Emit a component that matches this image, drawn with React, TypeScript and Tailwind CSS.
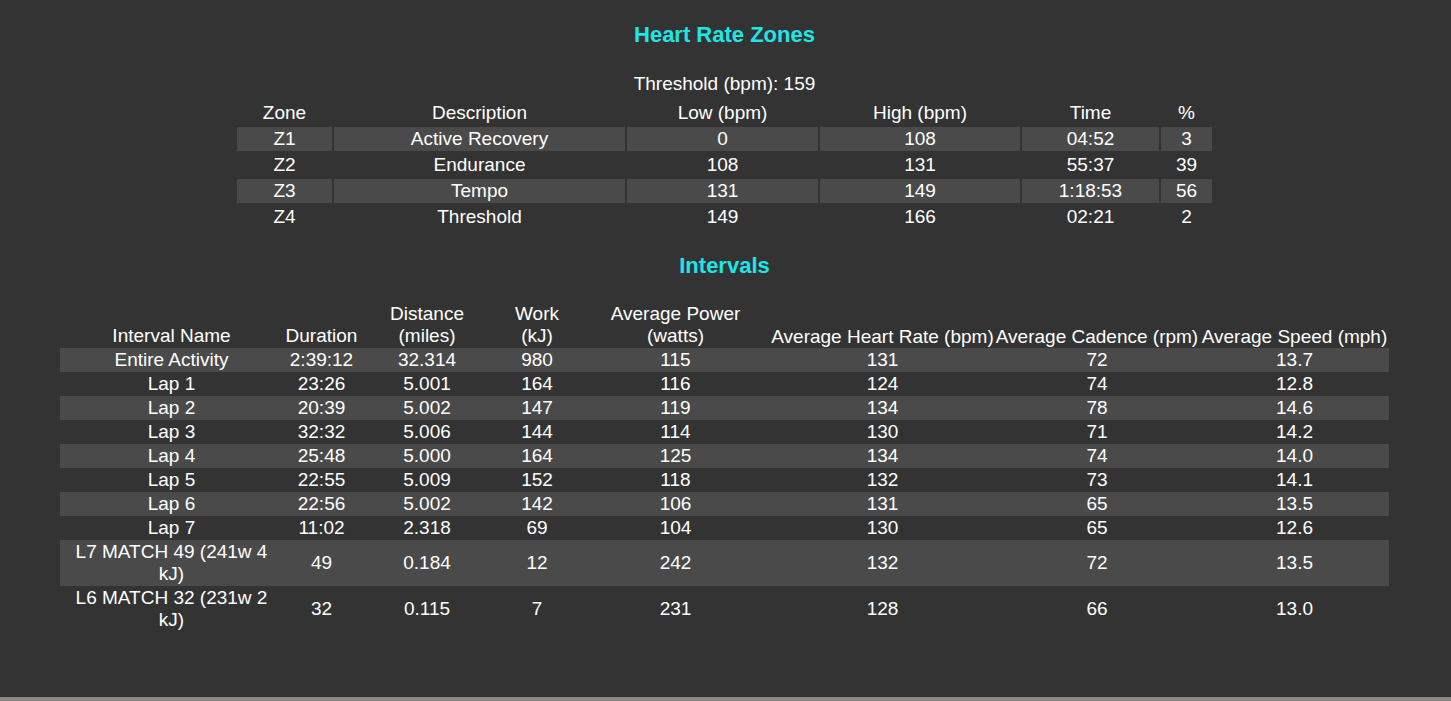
const zones = [
  ['Z1', 'Active Recovery', '0', '108', '04:52', '3'],
  ['Z2', 'Endurance', '108', '131', '55:37', '39'],
  ['Z3', 'Tempo', '131', '149', '1:18:53', '56'],
  ['Z4', 'Threshold', '149', '166', '02:21', '2'],
];

const intervals = [
  ['Entire Activity', '2:39:12', '32.314', '980', '115', '131', '72', '13.7'],
  ['Lap 1', '23:26', '5.001', '164', '116', '124', '74', '12.8'],
  ['Lap 2', '20:39', '5.002', '147', '119', '134', '78', '14.6'],
  ['Lap 3', '32:32', '5.006', '144', '114', '130', '71', '14.2'],
  ['Lap 4', '25:48', '5.000', '164', '125', '134', '74', '14.0'],
  ['Lap 5', '22:55', '5.009', '152', '118', '132', '73', '14.1'],
  ['Lap 6', '22:56', '5.002', '142', '106', '131', '65', '13.5'],
  ['Lap 7', '11:02', '2.318', '69', '104', '130', '65', '12.6'],
  ['L7 MATCH 49 (241w 4 kJ)', '49', '0.184', '12', '242', '132', '72', '13.5'],
  ['L6 MATCH 32 (231w 2 kJ)', '32', '0.115', '7', '231', '128', '66', '13.0'],
];

export default function App() {
  return (
    <div className="w-[1451px] h-[701px] overflow-hidden bg-[#8b8982] font-['Liberation_Sans',Arial,sans-serif] text-white">
      <div className="h-[697px] bg-[#333333] flex flex-col items-center pt-[23px] pr-[2px] text-[19px]">
        {/* Heart rate zones */}
        <h2 className="text-[22px] leading-[24px] font-bold text-[#1ee6e6]">Heart Rate Zones</h2>
        <div className="mt-[26px] leading-[22px]">Threshold (bpm): 159</div>
        <table className="mt-[4px] table-fixed border-separate border-spacing-[2px] text-center leading-[22px]">
          <thead>
            <tr className="h-[24px]">
              <th className="w-[95px] font-normal p-px">Zone</th>
              <th className="w-[291px] font-normal p-px">Description</th>
              <th className="w-[191px] font-normal p-px">Low (bpm)</th>
              <th className="w-[200px] font-normal p-px">High (bpm)</th>
              <th className="w-[137px] font-normal p-px">Time</th>
              <th className="w-[51px] font-normal p-px">%</th>
            </tr>
          </thead>
          <tbody>
            {zones.map((z, i) => (
              <tr key={z[0]} className="h-[24px]">
                {z.map((c, j) => (
                  <td key={j} className={`p-px ${i % 2 === 0 ? 'bg-[#4a4a4a]' : ''}`}>
                    {c}
                  </td>
                ))}
              </tr>
            ))}
          </tbody>
        </table>

        {/* Intervals */}
        <h2 className="mt-[23px] text-[22px] leading-[24px] font-bold text-[#1ee6e6]">Intervals</h2>
        <table className="mt-[24px] table-fixed border-collapse text-center leading-[22px]">
          <thead>
            <tr>
              <th className="w-[223px] font-normal py-px px-2 align-bottom">Interval Name</th>
              <th className="w-[77px] font-normal p-px align-bottom">Duration</th>
              <th className="w-[134px] font-normal p-px align-bottom">
                Distance
                <br />
                (miles)
              </th>
              <th className="w-[86px] font-normal p-px align-bottom">
                Work
                <br />
                (kJ)
              </th>
              <th className="w-[191px] font-normal p-px align-bottom">
                Average Power
                <br />
                (watts)
              </th>
              <th className="w-[223px] font-normal p-0 align-bottom whitespace-nowrap">Average Heart Rate (bpm)</th>
              <th className="w-[206px] font-normal p-0 align-bottom whitespace-nowrap">Average Cadence (rpm)</th>
              <th className="w-[189px] font-normal p-0 align-bottom whitespace-nowrap">Average Speed (mph)</th>
            </tr>
          </thead>
          <tbody>
            {intervals.map((r, i) => (
              <tr key={r[0]} className={i % 2 === 0 ? 'bg-[#4a4a4a]' : ''}>
                {r.map((c, j) => (
                  <td key={j} className={j === 0 ? 'py-px px-2' : 'p-px'}>
                    {c}
                  </td>
                ))}
              </tr>
            ))}
          </tbody>
        </table>
      </div>
    </div>
  );
}
